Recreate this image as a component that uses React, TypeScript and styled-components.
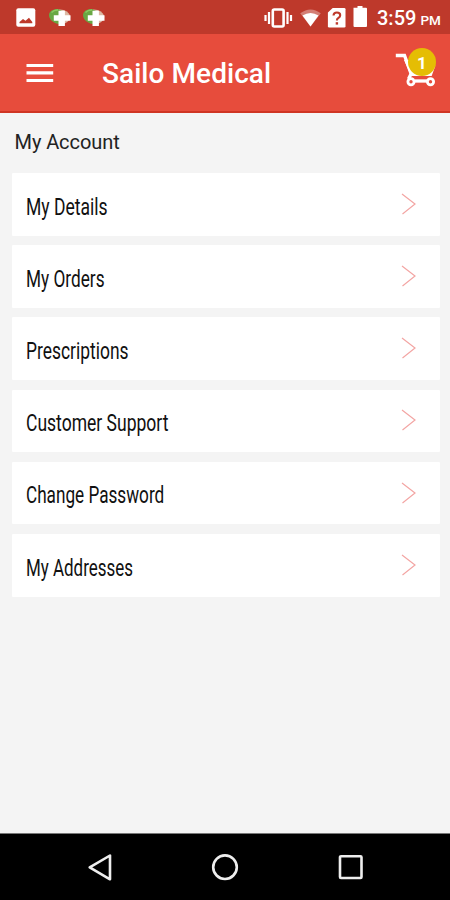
import React from "react";
import styled, { createGlobalStyle } from "styled-components";

const GlobalStyle = createGlobalStyle`
  * { box-sizing: border-box; }
  body { margin: 0; background: #f4f4f4; font-family: Roboto, "Liberation Sans", sans-serif; }
`;

const Screen = styled.div`
  width: 450px;
  height: 900px;
  display: flex;
  flex-direction: column;
  background: #f4f4f4;
  overflow: hidden;
`;

const StatusBar = styled.div`
  height: 34px;
  flex: none;
  display: flex;
  justify-content: space-between;
  background: #be392b;
`;

const StatusIcons = styled.svg`
  display: block;
  flex: none;
`;

const StatusRight = styled.div`
  display: flex;
`;

const Clock = styled.div`
  width: 79px;
  padding-left: 6px;
  display: flex;
  align-items: baseline;
  gap: 4px;
  color: #fff;
  font-size: 20px;
  line-height: 36px;
  font-weight: 500;
  white-space: nowrap;
`;

const Meridiem = styled.span`
  font-size: 13.5px;
  line-height: 1;
`;

const AppBar = styled.header`
  height: 79px;
  flex: none;
  display: flex;
  align-items: center;
  background: #e74c3c;
  border-bottom: 2px solid #cf3524;
`;

const IconButton = styled.button`
  padding: 0;
  border: 0;
  background: none;
  display: block;
  svg { display: block; }
`;

const MenuButton = styled(IconButton)`
  margin-left: 26px;
`;

const CartButton = styled(IconButton)`
  position: relative;
  margin: 0 12px 8px auto;
`;

const Badge = styled.span`
  position: absolute;
  top: 0;
  right: 2px;
  width: 28px;
  height: 28px;
  border-radius: 50%;
  background: #e5bd04;
  color: #fff;
  font: 700 17px/30px Roboto, sans-serif;
  text-align: center;
`;

const Title = styled.h1`
  margin: 3px 0 0 48px;
  color: #fff;
  font-size: 28px;
  line-height: 36px;
  font-weight: 500;
  letter-spacing: 0.06px;
`;

const Content = styled.main`
  flex: 1;
  padding: 16px 10.5px 0 11.5px;
`;

const Heading = styled.h2`
  margin: 0 0 18px 3px;
  color: #222;
  font-size: 20px;
  line-height: 26px;
  font-weight: 400;
  letter-spacing: -0.08px;
`;

const List = styled.div`
  display: flex;
  flex-direction: column;
  gap: 9.6px;
`;

const Row = styled.div`
  height: 62.6px;
  padding: 4.6px 23.5px 0 14.2px;
  display: flex;
  align-items: center;
  justify-content: space-between;
  background: #fff;
  border-radius: 1px;
`;

const Label = styled.span<{ $condense: number }>`
  color: #111;
  font-size: 24px;
  line-height: 32px;
  white-space: nowrap;
  transform: scaleX(${(p) => p.$condense});
  transform-origin: left center;
`;

const Arrow = styled.svg`
  display: block;
  margin-bottom: 5.6px;
`;

const NavBar = styled.nav`
  height: 67px;
  flex: none;
  display: flex;
  justify-content: space-between;
  padding: 19px 86px 0 85px;
  background: #000;
  border-top: 1px solid #777;
`;

const rows = [
  { label: "My Details", condense: 0.73 },
  { label: "My Orders", condense: 0.718 },
  { label: "Prescriptions", condense: 0.726 },
  { label: "Customer Support", condense: 0.73 },
  { label: "Change Password", condense: 0.715 },
  { label: "My Addresses", condense: 0.706 },
];

const PlusBadge = ({ x }: { x: number }) => (
  <g transform={`translate(${x} 0)`}>
    <path d="M9 9.500Q20 8.500 21.800 17q-2 8-11.800 7z" fill="#dcb9a4" />
    <path d="M.5 15C.5 11 5 8.800 9.500 9l4 2-3 13C5 23.500.5 19.500.5 15z" fill="#69a744" />
    <path d="M3 12.500Q5.500 9.800 9.500 10" fill="none" stroke="#8cc863" strokeWidth="1.500" />
    <path d="M10 10.800h6.400v4.400H22v5.600h-5.600V26H10v-5.200H5.300v-5.600H10z" fill="#fff" />
  </g>
);

const Notifications = () => (
  <StatusIcons width="120" height="34" viewBox="0 0 120 34">
    <rect x="16.300" y="8.200" width="19" height="18.600" rx="2" fill="#fff" />
    <path d="M19.500 23.300v-1.300l3.500-2.900 2.500 1.700 3.500-3 3.300 4.200v1.300z" fill="#be392b" />
    <PlusBadge x={48.5} />
    <PlusBadge x={82.5} />
  </StatusIcons>
);

const SystemIcons = () => (
  <StatusIcons width="108" height="34" viewBox="0 0 108 34">
    <g fill="none" stroke="#fff">
      <rect x="9.800" y="9.500" width="10.800" height="17" rx="1.500" strokeWidth="2.600" />
      <path d="M6 12v12M24.500 12v12" strokeWidth="2.200" />
      <path d="M2.500 15v6M28 15v6" strokeWidth="2.200" />
    </g>
    <path d="M37.200 13.300Q47.500 5.500 57.800 13.300L47.500 26.500z" fill="#fff" opacity=".35" />
    <path d="M39.500 15.500Q47.500 10.500 55.500 15.500L47.500 26.500z" fill="#fff" />
    <path d="M70.500 8H82q1.300 0 1.300 1.300v17q0 1.300-1.300 1.300H67q-1.300 0-1.300-1.300V12.500z" fill="#fff" transform="translate(-.8 0)" />
    <path d="M70.500 15.500q.2-3 3.400-3 3.300 0 3.300 2.700 0 1.600-1.700 2.700t-1.600 2.600" fill="none" stroke="#be392b" strokeWidth="2.100" />
    <rect x="72.700" y="22.200" width="2.400" height="2.400" fill="#be392b" />
    <path d="M90.500 7.800h4V6h5v1.800h3.500q1 0 1 1V26q0 1-1 1H91.500q-1 0-1-1z" fill="#fff" />
  </StatusIcons>
);

const Cart = () => (
  <svg width="43" height="42" viewBox="0 0 43 42">
    <path d="M9 12h17v16H16z" fill="#fff" />
    <g fill="none" stroke="#fff" strokeWidth="3.300">
      <path d="M.8 7.500h8.700l6.800 18.800h19.200l3.300-9" />
      <path d="M16 26l-2.500 5" />
      <path d="M20 33h12" />
      <circle cx="16" cy="33.800" r="3.100" strokeWidth="2.800" />
      <circle cx="35.500" cy="33.800" r="3.100" strokeWidth="2.800" />
    </g>
  </svg>
);

export default function App() {
  return (
    <>
      <GlobalStyle />
      <Screen>
        <StatusBar>
          <Notifications />
          <StatusRight>
            <SystemIcons />
            <Clock>
              3:59<Meridiem>PM</Meridiem>
            </Clock>
          </StatusRight>
        </StatusBar>
        <AppBar>
          <MenuButton aria-label="Menu">
            <svg width="28" height="20" viewBox="0 0 28 20">
              <path d="M.5 2.500h26.700M.5 9.900h26.700M.5 17.500h26.700" stroke="#fff" strokeWidth="3.200" />
            </svg>
          </MenuButton>
          <Title>Sailo Medical</Title>
          <CartButton aria-label="Cart">
            <Cart />
            <Badge>1</Badge>
          </CartButton>
        </AppBar>
        <Content>
          <Heading>My Account</Heading>
          <List>
            {rows.map((row) => (
              <Row key={row.label}>
                <Label $condense={row.condense}>{row.label}</Label>
                <Arrow width="15" height="22" viewBox="0 0 15 22">
                  <path d="M1 1l13 10L1.500 21" fill="none" stroke="#f3a5a3" strokeWidth="1.200" />
                </Arrow>
              </Row>
            ))}
          </List>
        </Content>
        <NavBar>
          <svg width="28" height="30" viewBox="0 0 28 30">
            <path d="M25 2.500v23.800L4.700 14.400z" fill="none" stroke="#eee" strokeWidth="2.600" strokeLinejoin="round" />
          </svg>
          <svg width="28" height="30" viewBox="0 0 28 30">
            <circle cx="14" cy="14.200" r="11.800" fill="none" stroke="#eee" strokeWidth="2.600" />
          </svg>
          <svg width="28" height="30" viewBox="0 0 28 30">
            <rect x="4" y="3.200" width="21.500" height="21.800" rx="1" fill="none" stroke="#eee" strokeWidth="2.600" />
          </svg>
        </NavBar>
      </Screen>
    </>
  );
}
